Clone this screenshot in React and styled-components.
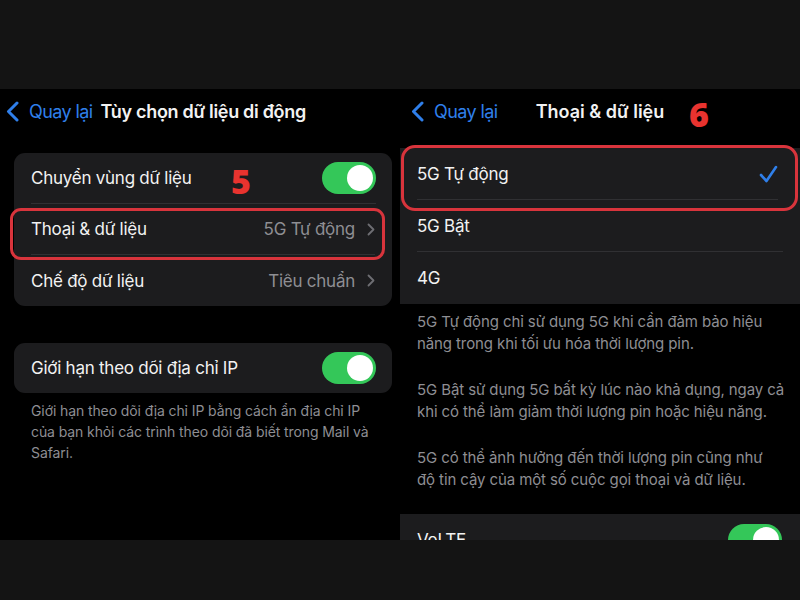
import React from "react";
import styled, { createGlobalStyle } from "styled-components";

const GlobalStyle = createGlobalStyle`
  html, body { margin: 0; padding: 0; background: #141414; }
  body { font-family: Inter, "Noto Sans", "Liberation Sans", sans-serif; -webkit-font-smoothing: antialiased; }
  * { box-sizing: border-box; }
`;

const Page = styled.div`
  width: 800px;
  height: 600px;
  display: flex;
  flex-direction: column;
  background: #141414;
  overflow: hidden;
`;

const Band = styled.div`
  height: ${(p) => p.$h}px;
  flex: none;
  background: #141414;
`;

const Screens = styled.div`
  height: 451px;
  flex: none;
  display: flex;
  background: #000;
`;

const Panel = styled.div`
  position: relative;
  width: 400px;
  flex: none;
  overflow: hidden;
  background: #000;
  display: flex;
  flex-direction: column;
`;

const NavBar = styled.div`
  position: relative;
  height: 44px;
  flex: none;
  display: ${(p) => (p.$centered ? "grid" : "flex")};
  grid-template-columns: 1fr auto 1fr;
  align-items: center;
  padding-left: ${(p) => p.$pad}px;
  padding-right: ${(p) => p.$padR || 0}px;
`;

const Back = styled.div`
  display: flex;
  align-items: center;
  gap: 10px;
  color: #2f7fea;
  font-size: 18px;
  letter-spacing: -0.6px;
`;

const NavTitle = styled.div`
  color: #f2f2f2;
  font-size: 18px;
  font-weight: 600;
  letter-spacing: ${(p) => p.$ls || "-0.3px"};
  margin-left: ${(p) => p.$ml || 0}px;
`;

const Marker = styled.div`
  position: absolute;
  left: ${(p) => p.$x}px;
  top: ${(p) => p.$y}px;
  color: #e8332f;
  font-family: "Open Sans", Inter, sans-serif;
  font-weight: 800;
  font-size: 34px;
  line-height: 1;
`;

const Card = styled.div`
  position: relative;
  margin: ${(p) => p.$m};
  background: #1c1c1e;
  border-radius: ${(p) => p.$r}px;
  flex: none;
`;

const Row = styled.div`
  height: ${(p) => p.$h}px;
  display: flex;
  align-items: center;
  padding-left: 17px;
  padding-right: ${(p) => p.$pr || 17}px;
`;

const RowInner = styled.div`
  flex: 1;
  height: 100%;
  display: flex;
  align-items: center;
  justify-content: space-between;
  border-bottom: ${(p) => (p.$sep ? "1px solid #303033" : "none")};
  color: #f2f2f2;
  font-size: 17px;
  letter-spacing: -0.25px;
`;

const Value = styled.div`
  display: flex;
  align-items: center;
  gap: 12px;
  color: #8e8e93;
`;

const Toggle = styled.div`
  position: relative;
  width: 54px;
  height: 32px;
  border-radius: 16px;
  background: #34c759;
  flex: none;
  &::after {
    content: "";
    position: absolute;
    right: 3px;
    top: 3px;
    width: 26px;
    height: 26px;
    border-radius: 50%;
    background: #fff;
  }
`;

const Footer = styled.div`
  padding: ${(p) => p.$pad};
  color: #8e8e93;
  font-size: ${(p) => p.$fs}px;
  line-height: ${(p) => p.$lh}px;
  letter-spacing: -0.1px;
`;

const Para = styled.p`
  margin: 0 0 ${(p) => p.$mb || 0}px;
`;

const Outline = styled.div`
  position: absolute;
  left: ${(p) => p.$l}px;
  top: ${(p) => p.$t}px;
  width: ${(p) => p.$w}px;
  height: ${(p) => p.$h}px;
  border: 3px solid #d8343c;
  border-radius: ${(p) => p.$r}px;
  pointer-events: none;
`;

const BackChevron = () => (
  <svg width="13" height="21" viewBox="0 0 13 21">
    <path d="M11 2 L2.5 10.5 L11 19" fill="none" stroke="#2f7fea" strokeWidth="3" strokeLinecap="round" strokeLinejoin="round" />
  </svg>
);

const Chevron = () => (
  <svg width="8" height="13" viewBox="0 0 8 13">
    <path d="M1.5 1.5 L6.5 6.5 L1.5 11.5" fill="none" stroke="#6e6e73" strokeWidth="1.8" strokeLinecap="round" strokeLinejoin="round" />
  </svg>
);

const Check = () => (
  <svg width="19" height="18" viewBox="0 0 19 18">
    <path d="M2 10 L7.5 16 L17 2" fill="none" stroke="#2f7fea" strokeWidth="2.6" strokeLinecap="round" strokeLinejoin="round" />
  </svg>
);

export default function App() {
  return (
    <Page>
      <GlobalStyle />
      <Band $h={89} />
      <Screens>
        <Panel>
          <NavBar $pad={6}>
            <Back>
              <BackChevron />
              Quay lại
            </Back>
            <NavTitle $ml={8}>Tùy chọn dữ liệu di động</NavTitle>
          </NavBar>
          <Card $m="20px 8px 0 14px" $r={11}>
            <Row $h={51} $pr={16}>
              <RowInner $sep>
                Chuyển vùng dữ liệu
                <Toggle />
              </RowInner>
            </Row>
            <Row $h={51}>
              <RowInner $sep>
                Thoại &amp; dữ liệu
                <Value>
                  5G Tự động
                  <Chevron />
                </Value>
              </RowInner>
            </Row>
            <Row $h={51}>
              <RowInner>
                Chế độ dữ liệu
                <Value>
                  Tiêu chuẩn
                  <Chevron />
                </Value>
              </RowInner>
            </Row>
            <Marker $x={217} $y={11}>5</Marker>
            <Outline $l={-4} $t={55} $w={375} $h={52} $r={11} />
          </Card>
          <Card $m="37px 8px 0 14px" $r={11}>
            <Row $h={50} $pr={16}>
              <RowInner>
                Giới hạn theo dõi địa chỉ IP
                <Toggle />
              </RowInner>
            </Row>
          </Card>
          <Footer $pad="7px 20px 0 31px" $fs={14} $lh={21}>
            Giới hạn theo dõi địa chỉ IP bằng cách ẩn địa chỉ IP
            <br />
            của bạn khỏi các trình theo dõi đã biết trong Mail và
            <br />
            Safari.
          </Footer>
        </Panel>
        <Panel>
          <NavBar $pad={11} $padR={11} $centered>
            <Back>
              <BackChevron />
              Quay lại
            </Back>
            <NavTitle $ls="0px">Thoại &amp; dữ liệu</NavTitle>
            <span />
            <Marker $x={289} $y={8}>6</Marker>
          </NavBar>
          <Card $m="15px 0 0 0" $r={0}>
            <Row $h={52} $pr={22}>
              <RowInner $sep>
                5G Tự động
                <Check />
              </RowInner>
            </Row>
            <Row $h={52}>
              <RowInner $sep>5G Bật</RowInner>
            </Row>
            <Row $h={52}>
              <RowInner>4G</RowInner>
            </Row>
            <Outline $l={1} $t={-3} $w={397} $h={66} $r={14} />
          </Card>
          <Footer $pad="7px 10px 0 17px" $fs={15} $lh={22}>
            <Para $mb={24}>
              5G Tự động chỉ sử dụng 5G khi cần đảm bảo hiệu
              <br />
              năng trong khi tối ưu hóa thời lượng pin.
            </Para>
            <Para $mb={24}>
              5G Bật sử dụng 5G bất kỳ lúc nào khả dụng, ngay cả
              <br />
              khi có thể làm giảm thời lượng pin hoặc hiệu năng.
            </Para>
            <Para>
              5G có thể ảnh hưởng đến thời lượng pin cũng như
              <br />
              độ tin cậy của một số cuộc gọi thoại và dữ liệu.
            </Para>
          </Footer>
          <Card $m="23px 0 0 0" $r={0}>
            <Row $h={52} $pr={18}>
              <RowInner>
                VoLTE
                <Toggle />
              </RowInner>
            </Row>
          </Card>
        </Panel>
      </Screens>
      <Band $h={60} />
    </Page>
  );
}
